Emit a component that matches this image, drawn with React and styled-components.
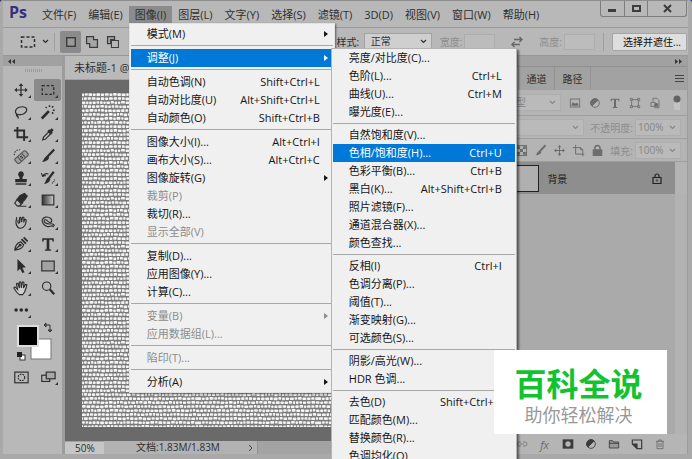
import React, { useState } from "react";
import styled, { createGlobalStyle, css } from "styled-components";

const GlobalStyle = createGlobalStyle`
  * {
    box-sizing: border-box;
  }
  body {
    margin: 0;
    background: #24246a;
    overflow: hidden;
  }
  body, button, input, select {
    font-family: "Open Sans", "Noto Sans CJK SC", sans-serif;
    font-size: 11px;
    color: #2e2e2e;
  }
  button {
    appearance: none;
    border: 0;
    padding: 0;
    background: none;
  }
  svg {
    display: block;
    flex: none;
  }
`;

const Frame = styled.div`
  position: relative;
  display: flex;
  flex-direction: column;
  height: 100vh;
  padding: 0 4px 5px 3px;
  border-radius: 3px 3px 0 0;
  background: #a9a9a9;
  overflow: hidden;
`;

/* menu bar */

const MenuBar = styled.header`
  display: flex;
  align-items: flex-start;
  height: 27px;
  flex: none;
  border-top: 1px solid #8d8d8d;
  background: #b8b8b8;
`;

const Logo = styled.div`
  width: 33px;
  padding-left: 6px;
  font-family: "Open Sans", sans-serif;
  font-size: 16px;
  font-weight: 700;
  line-height: 23px;
  color: #35307f;
`;

const MenuNav = styled.nav`
  display: flex;
  flex: 1;
  padding-top: 5px;
`;

const MenuSlot = styled.div`
  position: relative;
`;

const MenuTitle = styled.button`
  display: block;
  height: 17px;
  padding: 0 6px;
  line-height: 16px;
  white-space: nowrap;
  background: ${({ $open }) => ($open ? "#8c8c8c" : "transparent")};
`;

const WindowControls = styled.div`
  display: flex;
  height: 16px;
  margin-right: 1px;
  border: 1px solid #7e7e7e;
  border-top: 0;
  border-radius: 0 0 3px 3px;
`;

const WindowButton = styled.button`
  display: grid;
  place-items: center;
  width: ${({ $wide }) => ($wide ? 39 : 23)}px;
  & + & {
    border-left: 1px solid #7e7e7e;
  }
`;

/* drop-down menus */

const Menu = styled.div`
  position: absolute;
  z-index: 5;
  top: 100%;
  left: 0;
  width: 206px;
  padding: 1px;
  border: 1px solid #e2e2e2;
  background: #f0f0f0;
  box-shadow: 1px 1px 2px rgba(0, 0, 0, 0.5);
`;

const SubMenu = styled(Menu)`
  top: -1px;
  left: 200px;
  width: 186px;
  padding: 0 1px;
  border-color: #b4b4b4;
  box-shadow: 2px 2px 2px rgba(0, 0, 0, 0.5);
`;

const ItemSlot = styled.div`
  position: relative;
`;

const MenuItem = styled.button`
  display: grid;
  grid-template-columns: 1fr auto 13px;
  align-items: center;
  width: 100%;
  height: 18px;
  padding-left: 16px;
  text-align: left;
  line-height: 18px;
  white-space: nowrap;
  color: ${({ $active }) => ($active ? "#fff" : "#151515")};
  background: ${({ $active }) => ($active ? "#0078d7" : "transparent")};
  &:disabled {
    color: #8c8c8c;
  }
`;

const Arrow = styled.span`
  margin-left: 4px;
  border: 3px solid transparent;
  border-left: 4px solid currentColor;
  border-right: 0;
  width: 4px;
`;

const Separator = styled.hr`
  height: 1px;
  margin: 2px 0 ${({ $tight }) => ($tight ? 2 : 3)}px;
  border: 0;
  background: #a8a8a8;
`;

/* options bar */

const OptionsBar = styled.div`
  display: flex;
  align-items: center;
  justify-content: space-between;
  height: 29px;
  flex: none;
  padding: 0 1px 0 16px;
  border-top: 1px solid #9a9a9a;
  border-bottom: 1px solid #989898;
  background: #b8b8b8;
  font-size: 10px;
`;

const Group = styled.div`
  display: flex;
  align-items: center;
  gap: ${({ $gap }) => $gap || 0}px;
`;

const Divider = styled.span`
  width: 1px;
  height: 18px;
  background: #a0a0a0;
`;

const IconButton = styled.button`
  display: grid;
  place-items: center;
  width: 21px;
  height: 22px;
  border-radius: 2px;
  color: #3b3b3b;
  background: ${({ $active }) => ($active ? "#8b8b8b" : "transparent")};
`;

const SwapButton = styled.button`
  padding: 0 8px;
`;

const Field = styled.label`
  display: flex;
  align-items: center;
  gap: 2px;
  font-size: 10px;
  white-space: nowrap;
  color: ${({ $dim }) => ($dim ? "#8d8d8d" : "#2e2e2e")};
`;

const TextInput = styled.input`
  width: 31px;
  height: 16px;
  padding: 0 2px;
  border: 1px solid #adadad;
  font-size: 10px;
  color: #777;
  background: #bcbcbc;
`;

const SelectWrap = styled.span`
  display: flex;
  align-items: center;
  width: ${({ $width }) => $width}px;
  height: 17px;
  padding: 0 4px 0 2px;
  border: 1px solid ${({ $dim }) => ($dim ? "#adadad" : "#a2a2a2")};
  color: ${({ $dim }) => ($dim ? "#868686" : "#333")};
  background: ${({ $dim }) => ($dim ? "#bababa" : "#cfcfcf")};
`;

const Select = styled.select`
  appearance: none;
  flex: 1;
  min-width: 0;
  height: 15px;
  padding: 0 0 0 ${({ $indent }) => $indent || 0}px;
  border: 0;
  font-size: 10px;
  line-height: 15px;
  color: inherit;
  opacity: 1;
  background: transparent;
`;

const PushButton = styled.button`
  width: 75px;
  height: 18px;
  padding-left: 5px;
  border: 1px solid #a4a4a4;
  border-radius: 2px;
  font-size: 10px;
  white-space: nowrap;
  color: #111;
  background: #dedede;
`;

/* work area */

const Workspace = styled.main`
  display: flex;
  flex: 1;
  min-height: 0;
`;

const Toolbar = styled.aside`
  display: flex;
  flex-direction: column;
  width: 62px;
  flex: none;
  border-right: 3px solid #9c9c9c;
  background: #b8b8b8;
`;

const DockHeader = styled.div`
  display: flex;
  align-items: center;
  justify-content: ${({ $right }) => ($right ? "flex-end" : "flex-start")};
  height: 10px;
  flex: none;
  padding: 0 5px;
  background: #a1a1a1;
`;

const Grip = styled.div`
  width: 17px;
  height: 3px;
  margin: 3px 0 7px 22px;
  background: repeating-linear-gradient(90deg, #9b9b9b 0 1px, transparent 1px 2px);
`;

const ToolGrid = styled.div`
  display: grid;
  grid-template-columns: 27px 27px;
  grid-auto-rows: 22px;
  padding-left: 4px;
`;

const Tool = styled.button`
  display: grid;
  place-items: center;
  position: relative;
  border-radius: 2px;
  color: #2c2c2c;
  background: ${({ $active }) => ($active ? "#8a8a8a" : "transparent")};
  ${({ $corner }) =>
    $corner &&
    css`
      &::after {
        content: "";
        position: absolute;
        right: 3px;
        bottom: 3px;
        border-left: 3px solid transparent;
        border-bottom: 3px solid #333;
      }
    `}
`;

const Swatches = styled.div`
  padding: 0 0 5px 12px;
`;

const DocumentArea = styled.section`
  display: flex;
  flex-direction: column;
  flex: 1;
  min-width: 0;
`;

const TabStrip = styled.div`
  height: 24px;
  flex: none;
  padding-left: 9px;
  border-bottom: 1px solid #a2a2a2;
  line-height: 23px;
  white-space: nowrap;
  background: #bababa;
`;

const Pasteboard = styled.div`
  flex: 1;
  min-height: 0;
  padding: 13px 0 14px 17px;
  background: #6a6a6a;
`;

const Artboard = styled.svg`
  width: 100%;
  height: 100%;
`;

const StatusBar = styled.footer`
  display: flex;
  align-items: center;
  height: 13px;
  flex: none;
  font-size: 10px;
  background: #a3a3a3;
`;

const Zoom = styled.input`
  width: 39px;
  height: 12px;
  padding: 0 0 0 10px;
  border: 0;
  font-size: 10px;
  background: #c6c6c6;
`;

const DocInfo = styled.button`
  display: flex;
  align-items: center;
  justify-content: space-between;
  width: 154px;
  height: 13px;
  padding: 0 4px 0 32px;
  border-right: 1px solid #939393;
  font-size: 10px;
  line-height: 13px;
  background: #b2b2b2;
`;

/* layers panel */

const Panel = styled.aside`
  display: flex;
  flex-direction: column;
  width: 208px;
  flex: none;
  border-left: 3px solid #999;
  border-right: 1px solid #9c9c9c;
  background: #b4b4b4;
`;

const PanelTabs = styled.div`
  display: flex;
  align-items: center;
  height: 24px;
  flex: none;
  border-top: 1px solid #8f8f8f;
  background: #a2a2a2;
`;

const PanelTab = styled.button`
  width: 36px;
  height: 23px;
  border-right: 1px solid #949494;
  font-size: 10px;
  background: ${({ $active }) => ($active ? "#b4b4b4" : "transparent")};
`;

const PanelMenuButton = styled.button`
  margin-left: auto;
  margin-right: 3px;
`;

const PanelRow = styled.div`
  display: flex;
  align-items: center;
  justify-content: flex-end;
  gap: ${({ $gap }) => $gap || 0}px;
  height: ${({ $tall }) => ($tall ? 26 : 23)}px;
  flex: none;
  padding-right: ${({ $tall }) => ($tall ? 4 : 6)}px;
  border-bottom: 1px solid #9e9e9e;
  color: #6c6c6c;
`;

const LayerRow = styled.button`
  display: flex;
  align-items: center;
  gap: 8px;
  height: 32px;
  flex: none;
  margin-right: 12px;
  padding: 0 13px 0 26px;
  font-size: 10px;
  color: #1c1c1c;
  background: #8e8e8e;
`;

const Thumb = styled.span`
  width: 34px;
  height: 27px;
  margin-left: auto;
  border: 1px solid #222;
  background: #b0b0b0;
`;

const LayerName = styled.span`
  width: 109px;
  text-align: left;
`;

const LayerSpace = styled.div`
  flex: 1;
  border-right: 12px solid #b2b2b2;
  background: #aaa;
`;

const PanelFooter = styled.div`
  display: flex;
  align-items: center;
  justify-content: flex-end;
  gap: 2px;
  height: 20px;
  flex: none;
  padding-right: 17px;
  background: #b5b5b5;
`;

const Effects = styled.em`
  font-family: "Open Sans", sans-serif;
  font-size: 11px;
  color: #6a6a6a;
`;

const Watermark = styled.div`
  position: absolute;
  z-index: 10;
  right: 25px;
  bottom: 25px;
  width: 173px;
  height: 84px;
  padding: 13px 4px 0 0;
  text-align: center;
  font-family: "Noto Sans CJK SC", sans-serif;
  background: #fff;
`;

const WatermarkTitle = styled.div`
  font-size: 32px;
  font-weight: 700;
  line-height: 39px;
  color: #13c22f;
`;

const WatermarkText = styled.div`
  font-size: 18px;
  line-height: 24px;
  color: #999;
`;

/* icons */

const Icon = ({ size = 18, box = 18, children }) => (
  <svg
    width={size}
    height={size}
    viewBox={`0 0 ${box} ${box}`}
    fill="none"
    stroke="currentColor"
    strokeWidth="1.3"
    aria-hidden="true"
  >
    {children}
  </svg>
);

const Chevron = () => (
  <svg width="7" height="5" viewBox="0 0 7 5" fill="none" stroke="currentColor" strokeWidth="1.2">
    <path d="M1 1l2.500 2.500L6 1" />
  </svg>
);

const DoubleArrow = ({ flip }) => (
  <svg width="7" height="5" viewBox="0 0 7 5" fill="#333" transform={flip ? "rotate(180)" : undefined}>
    <path d="M3 0v5L0 2.500zM7 0v5L4 2.500z" />
  </svg>
);

const toolIcons = {
  move: (
    <path
      d="M9 1.500l2.600 3H9.700v3.800h3.800V6.400l3 2.600-3 2.600V9.700H9.700v3.800h1.900L9 16.500l-2.600-3h1.900V9.700H4.500v1.900L1.500 9l3-2.600v1.900h3.800V4.500H6.400z"
      fill="currentColor"
      stroke="none"
    />
  ),
  marquee: <rect x="2.500" y="4" width="13" height="10" strokeDasharray="3 2" strokeWidth="1.500" />,
  lasso: (
    <path d="M5.500 12.200C1.500 10.500 1.800 5.500 7 3.700c5-1.600 9.300.4 8.300 3.900-1 3.300-5.700 4.900-9 4.300-2.400-.5-2.700 1.400-1.300 2 1.300.5 1.300 1.700.2 2.300M4 11.500c-.8 1.100.3 2.300 1.600 1.400" />
  ),
  wand: (
    <>
      <path d="M2 16.300L10 8" strokeWidth="3" />
      <path d="M10.700 1.500v2M6.300 3.500l1.300 1M15 2.500l-1.500 1.500M14.500 7h2M13.500 9.500l1.500 1.300" strokeWidth="1.700" />
    </>
  ),
  crop: <path d="M1 5h11.500v12M5 1v11.700h12" strokeWidth="2.200" />,
  eyedropper: (
    <>
      <path d="M3 15.700l1-3.200 6-6 2.200 2.200-6 6z" />
      <path d="M9.300 4.800l4 4M11.300 6.800l3-3.300" strokeWidth="3.200" />
    </>
  ),
  heal: (
    <>
      <g transform="rotate(-42 10 10)">
        <rect x="1.500" y="6.500" width="16" height="7" rx="2" fill="#a0a0a0" stroke="#555" />
        <path d="M6.500 6.500v7M12.500 6.500v7" stroke="#555" />
        <path d="M8.500 9h2M8.500 11h2" />
      </g>
      <path d="M1.500 8C1 4.500 4 1.800 8 2" strokeDasharray="1.500 1.500" />
    </>
  ),
  brush: (
    <>
      <path d="M16 1.700L8.500 9.500" strokeWidth="2.600" />
      <path d="M8.200 8.700l2 2c-.5 3-4 5-8.200 4.800 2.300-1.200 2.600-5.500 6.200-6.800z" fill="currentColor" stroke="none" />
    </>
  ),
  stamp: (
    <path
      d="M9 1.500a3.300 3.300 0 0 1 2.200 5.700c-.9 1-.7 2.300-.3 3h4.600v3.600h-13v-3.600h4.600c.4-.7.600-2-.3-3A3.300 3.300 0 0 1 9 1.500zM3 15h12v1.500H3z"
      fill="currentColor"
      stroke="none"
    />
  ),
  history: (
    <>
      <path d="M15.500 2l-5.300 7" strokeWidth="2.500" />
      <path d="M9.500 8l2 1.700c0 3.800-3.300 6-7 6 2.300-2 2-5.700 5-7.700z" fill="currentColor" stroke="none" />
      <path d="M3 6.500c2-3 4-3 6.500-2M1.500 3.500L3 7l3.500-1" />
      <path d="M13.500 15c2.200-1.200 3-3 2.700-5" strokeDasharray="1 1.200" />
    </>
  ),
  eraser: (
    <>
      <path d="M8 4l5-2.500 3 3L13 9l-4.500 3.500-4-4z" fill="currentColor" />
      <path d="M4.500 8.500L2 12.500l2.500 3h3l4-4M5 16h10" />
    </>
  ),
  gradient: (
    <>
      <defs>
        <linearGradient id="tool-gradient">
          <stop offset="0" stopColor="#333" />
          <stop offset="1" stopColor="#ccc" />
        </linearGradient>
      </defs>
      <rect x="2.500" y="3.500" width="13" height="11" fill="url(#tool-gradient)" />
    </>
  ),
  smudge: (
    <path d="M4 3.500c.3 3-1.300 4.500-.5 7.500.8 2.700 2.600 5.500 5 5 3.500-.6 6-4 6.300-8.500.1-2-1.700-1.500-2-.5l-.8 2.500.3-5c0-1.500-1.600-1.500-1.800 0L9.500 9 9 4.500c-.2-1.300-1.700-1-1.600.2L7.500 9c-1 3.500-3-.5-1.500-2.500" />
  ),
  dodge: (
    <path d="M15.500 14.500c-2.500-3-4 .8-7.500-.5-3.500-1-6-4.300-5.500-7C3.200 3.500 8.500 2 12 5c2 1.700 1.600 4.300-.5 4.500-3 .3-2.300-2.500-5-3-2-.3-2.500 2-1 3 1.600 1.200 4.500 2 6.500 1.500 2-.3 3.500.7 4.500 2" />
  ),
  pen: (
    <>
      <path d="M2 16c.3-4.500 1.500-7.700 6.500-9.500l3.500 3.500c-1.500 4.500-5 5.500-10 6zM2 16l5-5" />
      <circle cx="8" cy="10.300" r="1" fill="currentColor" />
      <path d="M9.500 3.500l5 5M12 1.500l4.500 4.500" strokeWidth="2" />
    </>
  ),
  type: <path d="M2.500 2.500h13v4h-1.200c-.2-1.700-.8-2.400-2.300-2.400h-1.500V14c0 1 .6 1.300 2 1.300v1.200h-7v-1.200c1.400 0 2-.3 2-1.300V4.100H6c-1.500 0-2.100.7-2.300 2.400H2.500z" fill="currentColor" stroke="none" />,
  select: <path d="M5 1l9.500 9.500-4 .5 2.500 5-2.500 1L8 12l-3 2.800z" fill="currentColor" stroke="none" />,
  shape: <rect x="2" y="3.500" width="14" height="11" fill="#a3a3a3" />,
  hand: (
    <path d="M7 16.500C4.500 14.500 2.800 12 1.300 9.500c-.6-1.100.9-2 1.800-1l2 2L4 5c-.3-1.400 1.400-1.800 1.800-.4L7.200 9 7 3c0-1.400 1.800-1.400 1.900 0l.4 5.800L10.500 3c.3-1.300 2-1 1.800.4L11.700 9l2-3.500c.7-1.200 2.200-.4 1.700.8-1 3-1.400 7.500-4.400 10.200z" fill="#cfcfcf" />
  ),
  zoom: (
    <>
      <circle cx="7.500" cy="7" r="4.700" />
      <path d="M11 10.500l5 5.500" strokeWidth="2.500" />
    </>
  ),
  more: (
    <g fill="currentColor" stroke="none">
      <circle cx="3.500" cy="9" r="2" />
      <circle cx="9.300" cy="9" r="2" />
      <circle cx="15.100" cy="9" r="2" />
    </g>
  ),
  quickMask: (
    <>
      <rect x="2" y="3.500" width="15" height="12" />
      <circle cx="9.500" cy="9.500" r="3.700" strokeDasharray="2 1" />
    </>
  ),
  screen: (
    <>
      <rect x="2" y="7" width="9" height="7" />
      <rect x="7" y="3.500" width="10" height="7.500" fill="#a8a8a8" />
    </>
  ),
};

const panelIcons = {
  image: (
    <>
      <rect x="2" y="3" width="14" height="12" />
      <path d="M4 13v-3l2.500-2 2.500 2 2-1.500L14 10v3z" fill="currentColor" stroke="none" />
    </>
  ),
  adjust: (
    <>
      <circle cx="9" cy="9" r="6.500" />
      <path d="M13.600 4.400A6.500 6.500 0 0 0 4.400 13.600z" fill="currentColor" />
    </>
  ),
  type: toolIcons.type,
  frame: (
    <>
      <rect x="4" y="4" width="10" height="10" />
      <path d="M2 2h3v3H2zM13 2h3v3h-3zM2 13h3v3H2zM13 13h3v3h-3z" fill="#b4b4b4" />
    </>
  ),
  smart: (
    <>
      <path d="M6 2h6l3 3v11H8M6 2v5" />
      <rect x="3" y="8" width="6" height="6" />
      <path d="M9 10h4v4H9z" fill="currentColor" />
    </>
  ),
  checker: (
    <>
      <rect x="2" y="2" width="14" height="14" />
      <path d="M3 3h4v4H3zM11 3h4v4h-4zM7 7h4v4H7zM3 11h4v4H3zM11 11h4v4h-4z" fill="currentColor" stroke="none" />
    </>
  ),
  brush: toolIcons.brush,
  move: toolIcons.move,
  artboard: <path d="M1 5h11l3 3v9M5 1v13h12M12 5v3h3" />,
  lock: (
    <>
      <rect x="3" y="8" width="12" height="8" fill="currentColor" />
      <path d="M5.500 8V5.500a3.500 3.500 0 0 1 7 0V8" strokeWidth="2" />
    </>
  ),
  link: <path d="M7.500 6H4.500a3 3 0 0 0 0 6h3M10.500 6h3a3 3 0 0 1 0 6h-3M6 9h6" stroke="#777" />,
  mask: (
    <>
      <path d="M1 2h16v14H1z" fill="currentColor" stroke="none" />
      <circle cx="9" cy="9" r="4" fill="#b5b5b5" stroke="none" />
    </>
  ),
  folder: <path d="M2 15V4h5l1.500 2H16v9zM2 8h14" fill="#999" />,
  fresh: (
    <>
      <path d="M2 3h14v13H9L2 9zM2 9h7v7" strokeWidth="1.800" />
      <path d="M2 9h7v7z" fill="currentColor" stroke="none" />
    </>
  ),
  trash: <path d="M3 5h12M7 5V3h4v2M4.500 5v11h9V5M7.500 7.500v6M10.500 7.500v6" stroke="#6a6a6a" />,
};

const tools = [
  ["move", "移动"], ["marquee", "矩形选框"],
  ["lasso", "套索"], ["wand", "魔棒"],
  ["crop", "裁剪"], ["eyedropper", "吸管"],
  ["heal", "修复画笔"], ["brush", "画笔"],
  ["stamp", "仿制图章"], ["history", "历史记录画笔"],
  ["eraser", "橡皮擦"], ["gradient", "渐变"],
  ["smudge", "涂抹"], ["dodge", "减淡"],
  ["pen", "钢笔"], ["type", "文字"],
  ["select", "路径选择"], ["shape", "矩形"],
  ["hand", "抓手"], ["zoom", "缩放"],
  ["more", "更多"],
];

const menuTitles = [
  "文件(F)", "编辑(E)", "图像(I)", "图层(L)", "文字(Y)", "选择(S)",
  "滤镜(T)", "3D(D)", "视图(V)", "窗口(W)", "帮助(H)",
];

const adjustMenu = [
  { label: "亮度/对比度(C)..." },
  { label: "色阶(L)...", keys: "Ctrl+L" },
  { label: "曲线(U)...", keys: "Ctrl+M" },
  { label: "曝光度(E)..." },
  null,
  { label: "自然饱和度(V)..." },
  { label: "色相/饱和度(H)...", keys: "Ctrl+U", active: true },
  { label: "色彩平衡(B)...", keys: "Ctrl+B" },
  { label: "黑白(K)...", keys: "Alt+Shift+Ctrl+B" },
  { label: "照片滤镜(F)..." },
  { label: "通道混合器(X)..." },
  { label: "颜色查找..." },
  null,
  { label: "反相(I)", keys: "Ctrl+I" },
  { label: "色调分离(P)..." },
  { label: "阈值(T)..." },
  { label: "渐变映射(G)..." },
  { label: "可选颜色(S)..." },
  null,
  { label: "阴影/高光(W)..." },
  { label: "HDR 色调..." },
  null,
  { label: "去色(D)", keys: "Shift+Ctrl+U" },
  { label: "匹配颜色(M)..." },
  { label: "替换颜色(R)..." },
  { label: "色调均化(Q)" },
];

const imageMenu = [
  { label: "模式(M)", arrow: true },
  null,
  { label: "调整(J)", arrow: true, active: true, items: adjustMenu },
  null,
  { label: "自动色调(N)", keys: "Shift+Ctrl+L" },
  { label: "自动对比度(U)", keys: "Alt+Shift+Ctrl+L" },
  { label: "自动颜色(O)", keys: "Shift+Ctrl+B" },
  null,
  { label: "图像大小(I)...", keys: "Alt+Ctrl+I" },
  { label: "画布大小(S)...", keys: "Alt+Ctrl+C" },
  { label: "图像旋转(G)", arrow: true },
  { label: "裁剪(P)", disabled: true },
  { label: "裁切(R)..." },
  { label: "显示全部(V)", disabled: true },
  null,
  { label: "复制(D)..." },
  { label: "应用图像(Y)..." },
  { label: "计算(C)..." },
  null,
  { label: "变量(B)", arrow: true, disabled: true },
  { label: "应用数据组(L)...", disabled: true },
  null,
  { label: "陷印(T)...", disabled: true },
  null,
  { label: "分析(A)", arrow: true },
];

const MenuItems = ({ items, tight }) =>
  items.map((item, i) =>
    item ? (
      <ItemSlot key={i}>
        <MenuItem $active={item.active} disabled={item.disabled}>
          <span>{item.label}</span>
          <span>{item.keys}</span>
          {item.arrow && <Arrow />}
        </MenuItem>
        {item.items && (
          <SubMenu>
            <MenuItems items={item.items} tight />
          </SubMenu>
        )}
      </ItemSlot>
    ) : (
      <Separator key={i} $tight={tight} />
    )
  );

// one tile of the stone texture: rows of small rounded cells of uneven width
const tileWidth = 120;
const tileHeight = 48;
const buildCells = () => {
  const cells = [];
  let seed = 7;
  const rand = () => {
    seed = (seed * 16807) % 2147483647;
    return seed / 2147483647;
  };
  for (let y = 0; y < tileHeight; y += 4) {
    let x = 0;
    // every other row starts half a cell in
    const shift = (y / 4) % 2 ? 2 : 0;
    while (x < tileWidth) {
      let w = 3 + rand() * 1.8;
      if (tileWidth - x - w < 2.5) w = tileWidth - x;
      const cell = { x: x + shift, y: y + rand() * 0.6, w: w - 0.8 };
      cells.push(cell);
      if (cell.x + cell.w > tileWidth) cells.push({ ...cell, x: cell.x - tileWidth });
      x += w;
    }
  }
  return cells;
};
const cells = buildCells();

const StoneTexture = () => (
  <Artboard aria-label="画布">
    <defs>
      <pattern id="stones" width={tileWidth} height={tileHeight} patternUnits="userSpaceOnUse">
        <rect width={tileWidth} height={tileHeight} fill="#7c7c7c" />
        {cells.map((c, i) => (
          <rect key={i} x={c.x} y={c.y} width={c.w} height="2.600" rx="0.700" fill="#f4f4f4" />
        ))}
      </pattern>
    </defs>
    <rect width="100%" height="100%" fill="url(#stones)" />
  </Artboard>
);

const App = () => {
  const [tool, setTool] = useState("marquee");
  const [openMenu, setOpenMenu] = useState("图像(I)");

  return (
    <>
      <GlobalStyle />
      <Frame>
        <MenuBar>
          <Logo>Ps</Logo>
          <MenuNav>
            {menuTitles.map((title) => (
              <MenuSlot key={title}>
                <MenuTitle $open={title === openMenu} onClick={() => setOpenMenu(title)}>
                  {title}
                </MenuTitle>
                {title === "图像(I)" && openMenu === title && (
                  <Menu>
                    <MenuItems items={imageMenu} />
                  </Menu>
                )}
              </MenuSlot>
            ))}
          </MenuNav>
          <WindowControls>
            <WindowButton aria-label="最小化">
              <svg width="9" height="9" viewBox="0 0 9 9"><path d="M0 5h8v3H0z" fill="#3d3d3d" /></svg>
            </WindowButton>
            <WindowButton aria-label="最大化">
              <svg width="9" height="9" viewBox="0 0 9 9"><path d="M1 2h7v5H1z" fill="none" stroke="#3d3d3d" strokeWidth="2" /></svg>
            </WindowButton>
            <WindowButton $wide aria-label="关闭">
              <svg width="9" height="9" viewBox="0 0 9 9"><path d="M1 1l7 7M8 1L1 8" stroke="#3d3d3d" strokeWidth="2" /></svg>
            </WindowButton>
          </WindowControls>
        </MenuBar>

        <OptionsBar>
          <Group $gap={5}>
            <Icon>{toolIcons.marquee}</Icon>
            <Chevron />
            <Divider />
            <Group>
              <IconButton $active aria-label="新选区">
                <Icon size={14}><rect x="3.500" y="3.500" width="11" height="11" fill="#999" strokeWidth="1.800" /></Icon>
              </IconButton>
              <IconButton aria-label="添加到选区">
                <Icon size={14}><path d="M2 2h9v4h5v10H6v-5H2z" fill="#a5a5a5" strokeWidth="1.600" /></Icon>
              </IconButton>
              <IconButton aria-label="从选区减去">
                <Icon size={14}><path d="M2 2h9v4H6v5H2z" fill="#a5a5a5" strokeWidth="1.600" /><path d="M7 7h9v9H7z" /></Icon>
              </IconButton>
            </Group>
          </Group>
          <Group $gap={8}>
            <Field>
              样式:&nbsp;
              <SelectWrap $width={68}>
                <Select $indent={4} defaultValue="正常"><option>正常</option></Select>
                <Chevron />
              </SelectWrap>
            </Field>
            <Field $dim>宽度:<TextInput disabled /></Field>
            <SwapButton aria-label="交换宽度和高度">
              <svg width="12" height="12" viewBox="0 0 12 12" fill="none" stroke="#666" strokeWidth="1.400">
                <path d="M3 3.500h8M8.500 1L11 3.500 8.500 6M9 8.500H1M3.500 6L1 8.500 3.500 11" />
              </svg>
            </SwapButton>
            <Field $dim>高度:<TextInput disabled /></Field>
            <Divider />
            <PushButton>选择并遮住...</PushButton>
          </Group>
        </OptionsBar>

        <Workspace>
          <Toolbar>
            <DockHeader><DoubleArrow /></DockHeader>
            <Grip />
            <ToolGrid>
              {tools.map(([name, label]) => (
                <Tool
                  key={name}
                  $active={tool === name}
                  $corner={name !== "zoom"}
                  aria-label={label}
                  onClick={() => setTool(name)}
                >
                  <Icon size={16}>{toolIcons[name]}</Icon>
                </Tool>
              ))}
            </ToolGrid>
            <Swatches>
              <svg width="38" height="40" viewBox="0 0 38 40">
                <rect x="16" y="18" width="20" height="20" fill="#fff" stroke="#777" />
                <rect x="3" y="5" width="20" height="20" fill="#000" stroke="#ddd" strokeWidth="2" />
                <path d="M30 4h5v6M31 2l-2 2 2 2zM33 9l2 2 2-2z" fill="none" stroke="#333" />
                <rect x="5" y="34" width="5" height="5" fill="#fff" stroke="#333" />
                <rect x="2" y="31" width="5" height="5" fill="#222" />
              </svg>
            </Swatches>
            <ToolGrid>
              <Tool aria-label="快速蒙版"><Icon size={16}>{toolIcons.quickMask}</Icon></Tool>
              <Tool $corner aria-label="屏幕模式"><Icon size={16}>{toolIcons.screen}</Icon></Tool>
            </ToolGrid>
          </Toolbar>

          <DocumentArea>
            <TabStrip>未标题-1 @</TabStrip>
            <Pasteboard>
              <StoneTexture />
            </Pasteboard>
            <StatusBar>
              <Zoom aria-label="缩放比例" defaultValue="50%" />
              <DocInfo>
                文档:1.83M/1.83M
                <svg width="5" height="8" viewBox="0 0 5 8" fill="none" stroke="#444"><path d="M1 1l3 3-3 3" /></svg>
              </DocInfo>
            </StatusBar>
          </DocumentArea>

          <Panel>
            <DockHeader $right><DoubleArrow flip /></DockHeader>
            <PanelTabs>
              <PanelTab $active aria-label="图层" />
              <PanelTab>通道</PanelTab>
              <PanelTab>路径</PanelTab>
              <PanelMenuButton aria-label="面板菜单">
                <svg width="9" height="8" viewBox="0 0 9 8" stroke="#444"><path d="M0 .5h9M0 3.500h9M0 6.500h9" /></svg>
              </PanelMenuButton>
            </PanelTabs>
            <PanelRow $tall $gap={8}>
              <SelectWrap $width={58} $dim>
                <Select disabled aria-label="过滤类型"><option>类型</option></Select>
                <Chevron />
              </SelectWrap>
              <Icon size={12}>{panelIcons.image}</Icon>
              <Icon size={12}>{panelIcons.adjust}</Icon>
              <Icon size={12}>{panelIcons.type}</Icon>
              <Icon size={12}>{panelIcons.frame}</Icon>
              <Icon size={12}>{panelIcons.smart}</Icon>
              <svg width="14" height="16" viewBox="2 0 14 16">
                <rect x="7" y="4" width="6" height="11" fill="#c2c2c2" />
                <circle cx="10" cy="4" r="3.500" fill="#626262" />
              </svg>
            </PanelRow>
            <PanelRow $gap={6}>
              <SelectWrap $width={90} $dim>
                <Select disabled aria-label="混合模式"><option>正常</option></Select>
                <Chevron />
              </SelectWrap>
              <Field $dim>不透明度:<SelectWrap $width={46} $dim>
                <Select disabled><option>100%</option></Select>
                <Chevron />
              </SelectWrap></Field>
            </PanelRow>
            <PanelRow $gap={6}>
              <Icon size={13}>{panelIcons.checker}</Icon>
              <Icon size={13}>{panelIcons.brush}</Icon>
              <Icon size={13}>{panelIcons.move}</Icon>
              <Icon size={13}>{panelIcons.artboard}</Icon>
              <Icon size={13}>{panelIcons.lock}</Icon>
              <Field $dim>填充:<SelectWrap $width={46} $dim>
                <Select disabled><option>100%</option></Select>
                <Chevron />
              </SelectWrap></Field>
            </PanelRow>
            <LayerRow>
              <Thumb />
              <LayerName>背景</LayerName>
              <svg width="10" height="11" viewBox="0 0 10 11" fill="none" stroke="#222" strokeWidth="1.200">
                <path d="M1 4.500h8v6H1zM3 4.500V3a2 2 0 0 1 4 0v1.500M5 6.500v2" />
              </svg>
            </LayerRow>
            <LayerSpace />
            <PanelFooter>
              <IconButton aria-label="链接图层"><Icon size={12}>{panelIcons.link}</Icon></IconButton>
              <IconButton><Effects>fx</Effects></IconButton>
              <IconButton aria-label="添加蒙版"><Icon size={12}>{panelIcons.mask}</Icon></IconButton>
              <IconButton aria-label="调整图层"><Icon size={12}>{panelIcons.adjust}</Icon></IconButton>
              <IconButton aria-label="新建组"><Icon size={12}>{panelIcons.folder}</Icon></IconButton>
              <IconButton aria-label="新建图层"><Icon size={12}>{panelIcons.fresh}</Icon></IconButton>
              <IconButton aria-label="删除图层"><Icon size={12}>{panelIcons.trash}</Icon></IconButton>
            </PanelFooter>
          </Panel>
        </Workspace>

        <Watermark>
          <WatermarkTitle>百科全说</WatermarkTitle>
          <WatermarkText>助你轻松解决</WatermarkText>
        </Watermark>
      </Frame>
    </>
  );
};

export default App;
